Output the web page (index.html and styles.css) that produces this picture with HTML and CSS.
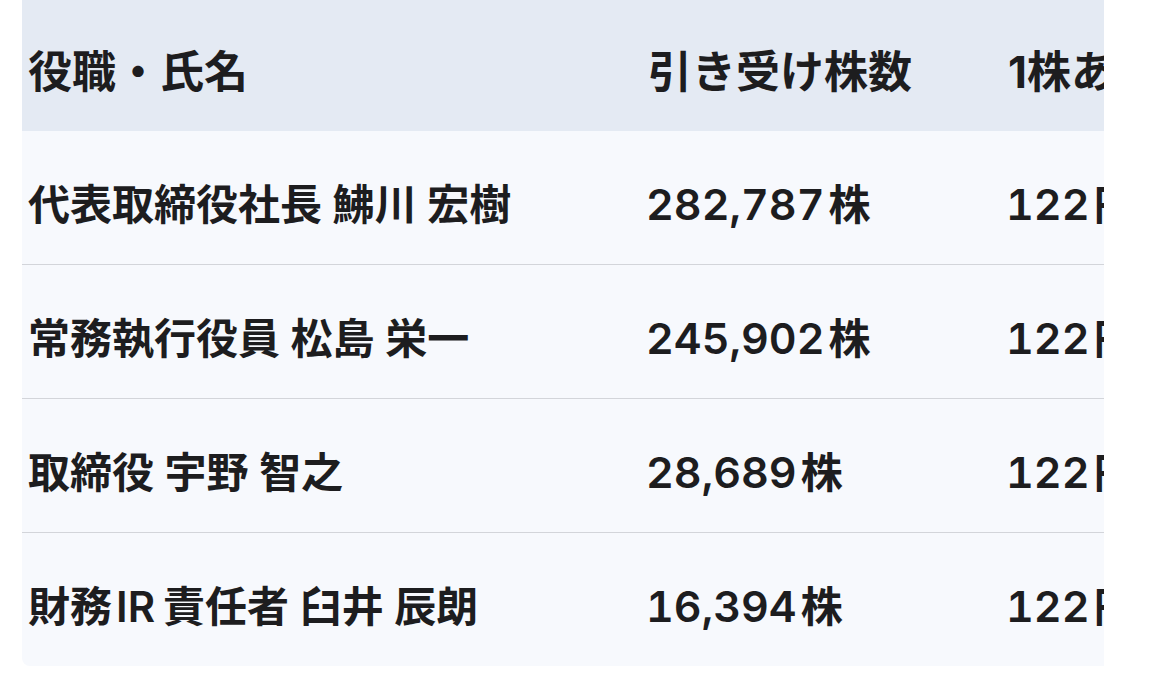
FILE: index.html
```html
<!DOCTYPE html>
<html lang="ja">
<head>
<meta charset="utf-8">
<link rel="stylesheet" href="styles.css">
</head>
<body>
<div class="table-wrap">
  <table class="alloc">
    <thead>
      <tr>
        <th class="c-name">役職・氏名</th>
        <th class="c-shares">引き受け株数</th>
        <th class="c-price">1株あたり払込金額</th>
      </tr>
    </thead>
    <tbody>
      <tr>
        <td>代表取締役社長 鮄川 宏樹</td>
        <td><span class="num">282,787</span><span class="unit">株</span></td>
        <td><span class="num">122</span><span class="unit">円</span></td>
      </tr>
      <tr>
        <td>常務執行役員 松島 栄一</td>
        <td><span class="num">245,902</span><span class="unit">株</span></td>
        <td><span class="num">122</span><span class="unit">円</span></td>
      </tr>
      <tr>
        <td>取締役 宇野 智之</td>
        <td><span class="num">28,689</span><span class="unit">株</span></td>
        <td><span class="num">122</span><span class="unit">円</span></td>
      </tr>
      <tr>
        <td>財務<span class="latin">IR</span>責任者 臼井 辰朗</td>
        <td><span class="num">16,394</span><span class="unit">株</span></td>
        <td><span class="num">122</span><span class="unit">円</span></td>
      </tr>
    </tbody>
  </table>
</div>
</body>
</html>
```
FILE: styles.css
```css
html, body {
  margin: 0;
  padding: 0;
  background: #ffffff;
}

body {
  font-family: "Inter", "Noto Sans CJK JP", sans-serif;
  color: #1d1d1f;
}

.table-wrap {
  margin-left: 22px;
  width: 1082px;
  overflow: hidden;
  border-bottom-left-radius: 8px;
}

.alloc {
  border-collapse: collapse;
  table-layout: fixed;
  width: 1400px;
  line-height: 66px;
}

.alloc th,
.alloc td {
  text-align: left;
  padding: 39px 0 26px 6px;
  white-space: nowrap;
  overflow: hidden;
}

.alloc th {
  background: #e4eaf3;
  font-size: 44px;
  font-weight: 700;
}

.alloc td {
  background: #f7f9fd;
  font-size: 42px;
  font-weight: 600;
  padding-top: 41px;
  border-top: 1px solid #d3d5da;
}

.alloc tbody tr:first-child td {
  border-top: none;
}

.latin {
  margin: 0 8px 0 4px;
}

.num {
  font-size: 43px;
  line-height: 1;
  font-variant-numeric: tabular-nums;
  margin-left: -2px;
}

.unit {
  margin-left: 4px;
}

.c-name { width: 614px; }
.c-shares { width: 354px; }
.c-price { width: 426px; }
```
